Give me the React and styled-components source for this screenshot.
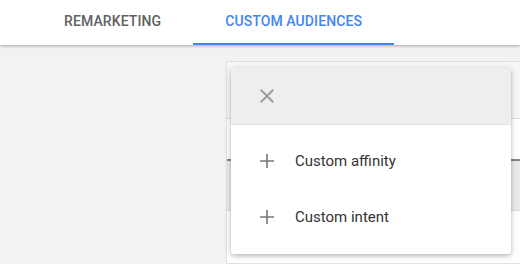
import React from 'react'
import styled, { createGlobalStyle } from 'styled-components'

const GlobalStyle = createGlobalStyle`
  html, body {
    margin: 0;
    padding: 0;
    background: #f1f2f4;
    font-family: Roboto, 'Liberation Sans', Arial, sans-serif;
  }
  #root {
    width: 520px;
    height: 264px;
    overflow: hidden;
  }
`

const Page = styled.div`
  display: flex;
  flex-direction: column;
  height: 264px;
`

const TabBar = styled.div`
  position: relative;
  z-index: 1;
  display: flex;
  height: 45px;
  padding-left: 32px;
  background: #fff;
  box-shadow: 0 1px 3px rgba(0, 0, 0, 0.3);
`

const Tab = styled.div`
  display: flex;
  align-items: center;
  padding: 0 32px 2px;
  font-size: 14px;
  font-weight: 500;
  letter-spacing: 0.1px;
  text-transform: uppercase;
  color: ${(p) => (p.active ? '#4285f4' : '#616161')};
  border-bottom: 2px solid ${(p) => (p.active ? '#4285f4' : 'transparent')};
`

const Content = styled.div`
  flex: 1;
  display: flex;
  padding: 16px 0 0 226px;
`

const Card = styled.div`
  position: relative;
  flex: 1;
  display: flex;
  flex-direction: column;
  background: #fff;
  border: 1px solid #e0e0e0;
  border-right: none;
`

const CardHead = styled.div`
  height: 56px;
  background: #f7f7f7;
  border-bottom: 1px solid #e0e0e0;
`

const CardRow = styled.div`
  height: 40px;
  border-bottom: 2px solid #80868b;
`

const CardBand = styled.div`
  height: 49px;
  background: #ebebeb;
  border-bottom: 1px solid #e0e0e0;
`

const Menu = styled.div`
  position: absolute;
  left: 4px;
  top: 6px;
  width: 280px;
  background: #fff;
  border-radius: 3px;
  box-shadow: 0 2px 4px rgba(0, 0, 0, 0.2), 0 1px 8px rgba(0, 0, 0, 0.12);
  overflow: hidden;
  padding-bottom: 9px;
`

const MenuHead = styled.div`
  display: flex;
  align-items: center;
  height: 56px;
  padding-left: 24px;
  background: #eeeeee;
  border-bottom: 1px solid #e0e0e0;
`

const MenuList = styled.div`
  padding-top: 8px;
`

const MenuItem = styled.div`
  display: flex;
  align-items: center;
  gap: 16px;
  height: 56px;
  padding-left: 24px;
  font-size: 15px;
  color: #333;
`

const Icon = styled.svg`
  width: 24px;
  height: 24px;
  fill: ${(p) => p.color};
  flex-shrink: 0;
`

const CloseIcon = () => (
  <Icon viewBox='0 0 24 24' color='#9e9e9e'>
    <path d='M19 6.41L17.59 5 12 10.59 6.41 5 5 6.41 10.59 12 5 17.59 6.41 19 12 13.41 17.59 19 19 17.59 13.41 12z' />
  </Icon>
)

const AddIcon = () => (
  <Icon viewBox='0 0 24 24' color='#757575'>
    <path d='M19 12.8h-6.2V19h-1.6v-6.2H5v-1.6h6.2V5h1.6v6.2H19z' />
  </Icon>
)

const items = ['Custom affinity', 'Custom intent']

export default function App() {
  return (
    <Page>
      <GlobalStyle />
      <TabBar>
        <Tab>Remarketing</Tab>
        <Tab active>Custom audiences</Tab>
      </TabBar>
      <Content>
        <Card>
          <CardHead />
          <CardRow />
          <CardBand />
          <Menu>
            <MenuHead>
              <CloseIcon />
            </MenuHead>
            <MenuList>
              {items.map((label) => (
                <MenuItem key={label}>
                  <AddIcon />
                  {label}
                </MenuItem>
              ))}
            </MenuList>
          </Menu>
        </Card>
      </Content>
    </Page>
  )
}
